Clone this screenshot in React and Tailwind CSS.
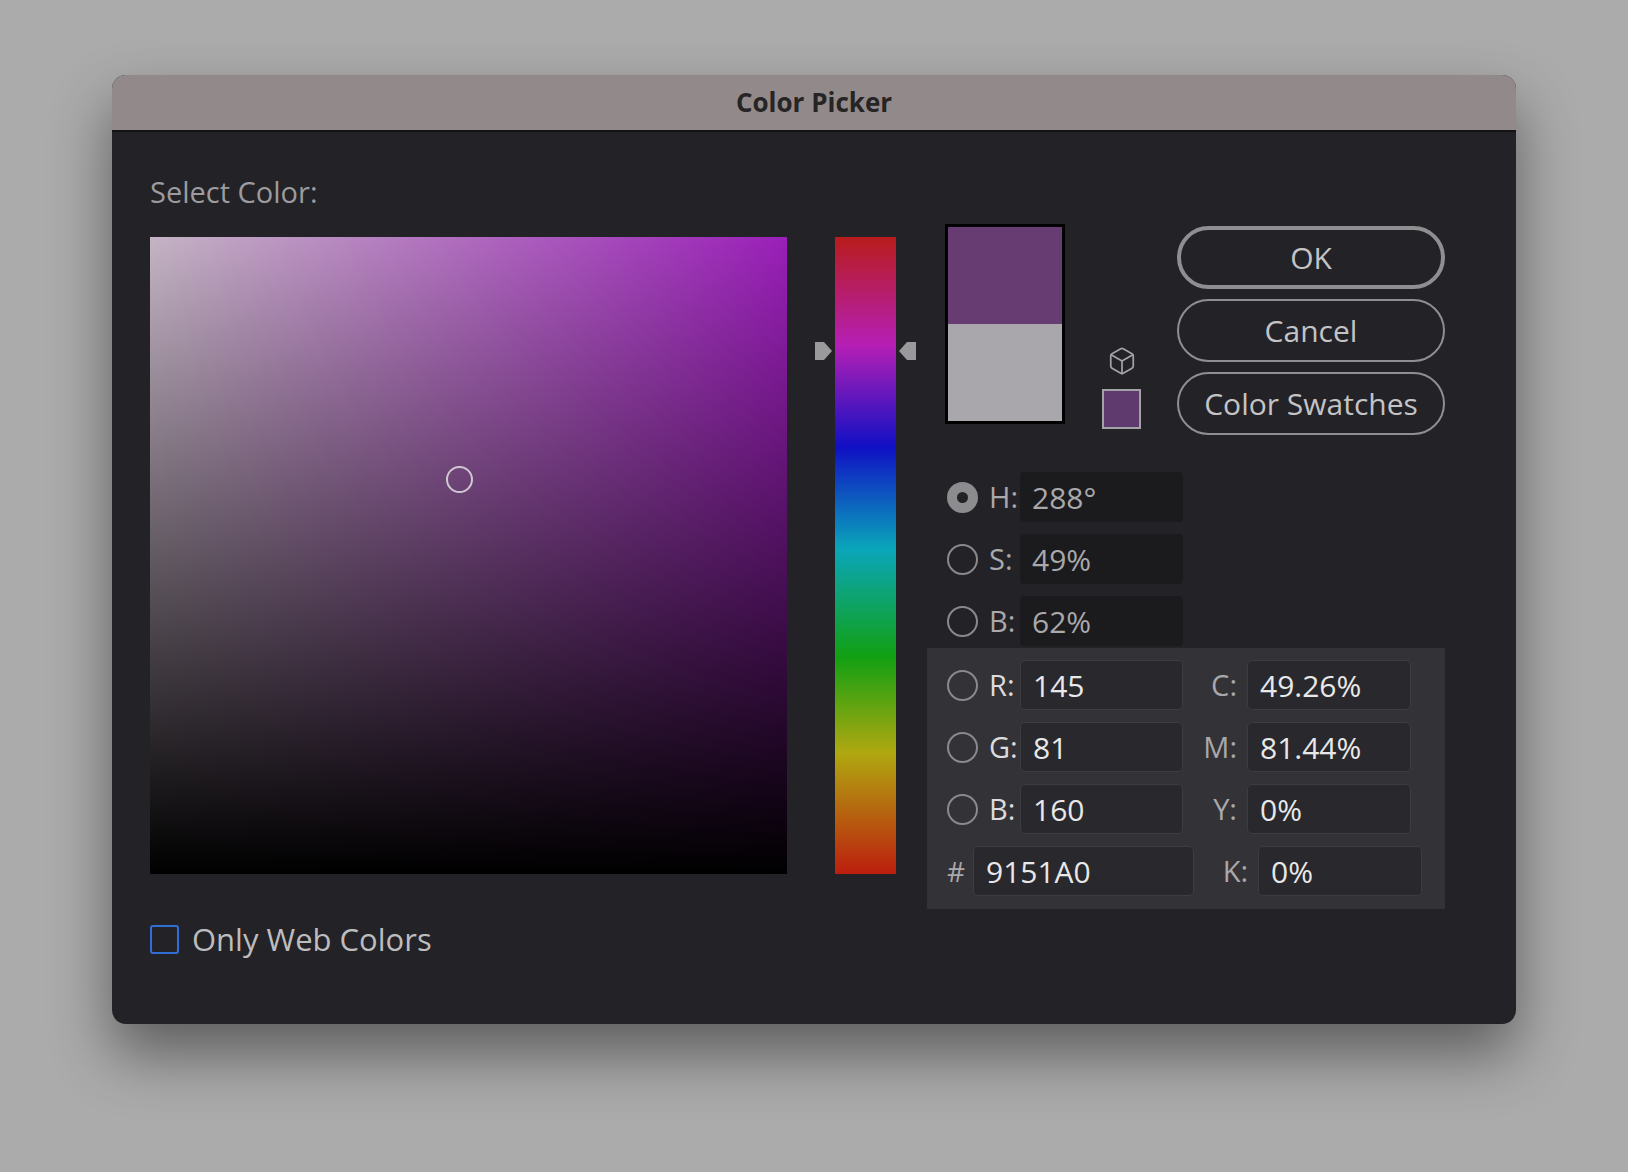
import React from 'react';
import { Box } from 'lucide-react';

const FONT = { fontFamily: '"Open Sans", "Noto Sans", sans-serif' };

function Radio({ on }) {
  if (on) {
    return (
      <div className="w-[31px] h-[31px] rounded-full bg-[#8c8b8e] flex items-center justify-center shrink-0">
        <div className="w-[11px] h-[11px] rounded-full bg-[#232226]" />
      </div>
    );
  }
  return <div className="w-[31px] h-[31px] rounded-full border-2 border-[#8a898c] shrink-0" />;
}

// HSB row: dimmer, dark inputs
function HsbRow({ label, value, on }) {
  return (
    <div className="flex items-center h-[50px] pl-[20px]">
      <Radio on={on} />
      <span className="w-[42px] pl-[11px] text-[29px] text-[#a9a8ab]">{label}</span>
      <div className="w-[163px] h-[50px] rounded-[4px] bg-[#1b1a1d] flex items-center pl-[12px] text-[30px] text-[#a9a8ab]">
        {value}
      </div>
    </div>
  );
}

function Field({ value, w = 'w-[163px]' }) {
  return (
    <div className={`${w} h-[50px] rounded-[5px] bg-[#29282c] border border-[#3d3c40] flex items-center pl-[12px] text-[30px] text-[#e8e8ea]`}>
      {value}
    </div>
  );
}

function PanelRow({ label, value, cLabel, cValue }) {
  return (
    <div className="flex items-center h-[50px]">
      <Radio />
      <span className="w-[42px] pl-[11px] text-[29px] text-[#dcdcde]">{label}</span>
      <Field value={value} />
      <span className="w-[64px] text-right pr-[10px] text-[29px] text-[#a9a8ab]">{cLabel}</span>
      <Field value={cValue} w="w-[164px]" />
    </div>
  );
}

function Button({ children, primary }) {
  return (
    <div
      className={`w-[268px] h-[63px] rounded-full flex items-center justify-center text-[30px] text-[#c4c3c6] ${
        primary ? 'border-[4px] border-[#8f8e91]' : 'border-2 border-[#8f8e91]'
      }`}
    >
      {children}
    </div>
  );
}

export default function App() {
  return (
    <div className="min-h-[1172px] w-[1628px] bg-[#ababab] pt-[75px] pl-[112px]" style={FONT}>
      <div className="w-[1404px] h-[949px] rounded-[14px] bg-[#232226] overflow-hidden shadow-[0_30px_60px_rgba(0,0,0,0.45)]">
        {/* title bar */}
        <div className="h-[57px] bg-[#928a8a] border-b-2 border-[#141414] flex items-center justify-center">
          <span className="text-[26px] font-bold text-[#262424]">Color Picker</span>
        </div>

        <div className="px-[38px]">
          <div className="pt-[38px] h-[92px] text-[29px] text-[#9c9b9e]">Select Color:</div>

          <div className="flex items-start">
            {/* saturation/brightness field */}
            <div className="pt-[13px]">
              <div className="relative w-[637px] h-[637px] bg-[#9a1fb8]">
                <div className="absolute inset-0 bg-gradient-to-r from-[#c4b4c4] to-transparent" />
                <div className="absolute inset-0 bg-gradient-to-b from-transparent to-black" />
                <div className="absolute left-[296px] top-[229px] w-[27px] h-[27px] rounded-full border-2 border-[#cfc8d0]" />
              </div>
              <div className="flex items-center mt-[42px]">
                <div className="w-[29px] h-[29px] rounded-[3px] border-2 border-[#2f6fd6]" />
                <span className="ml-[13px] text-[31px] text-[#bdbcbf]">Only Web Colors</span>
              </div>
            </div>

            {/* hue strip */}
            <div className="pt-[13px] ml-[48px] relative">
              <div className="w-[61px] h-[637px] bg-[linear-gradient(to_bottom,#b81c1c_0%,#b51fb5_17%,#1010c4_33%,#0aa6ba_49%,#12a012_66%,#b0a810_81%,#bc1e0e_100%)]" />
              <svg className="absolute left-[-21px] top-[117px]" width="19" height="20" viewBox="0 0 19 20">
                <path d="M1 1 H10 L18 10 L10 19 H1 Z" fill="#9a999c" />
              </svg>
              <svg className="absolute right-[-21px] top-[117px]" width="19" height="20" viewBox="0 0 19 20">
                <path d="M18 1 H9 L1 10 L9 19 H18 Z" fill="#9a999c" />
              </svg>
            </div>

            {/* right side */}
            <div className="ml-[31px] w-[518px]">
              <div className="flex items-start">
                <div className="ml-[18px] w-[153px] h-[200px] border-[3px] border-black flex flex-col">
                  <div className="h-[97px] bg-[#673c72]" />
                  <div className="flex-1 bg-[#a9a7ab]" />
                </div>
                <div className="ml-[37px] mt-[122px] flex flex-col items-center">
                  <Box size={30} strokeWidth={1.4} className="text-[#a3a2a5]" />
                  <div className="mt-[13px] w-[39px] h-[40px] bg-[#5e3a6e] border-2 border-[#a3a2a5]" />
                </div>
                <div className="ml-[36px] mt-[2px] flex flex-col gap-[10px]">
                  <Button primary>OK</Button>
                  <Button>Cancel</Button>
                  <Button>Color Swatches</Button>
                </div>
              </div>

              <div className="mt-[37px] flex flex-col gap-[12px]">
                <HsbRow label="H:" value="288°" on />
                <HsbRow label="S:" value="49%" />
                <HsbRow label="B:" value="62%" />
              </div>

              <div className="mt-[2px] w-[518px] bg-[#333236] pl-[20px] pt-[12px] pb-[13px] flex flex-col gap-[12px]">
                <PanelRow label="R:" value="145" cLabel="C:" cValue="49.26%" />
                <PanelRow label="G:" value="81" cLabel="M:" cValue="81.44%" />
                <PanelRow label="B:" value="160" cLabel="Y:" cValue="0%" />
                <div className="flex items-center h-[50px]">
                  <span className="w-[26px] text-[28px] text-[#a9a8ab]">#</span>
                  <Field value="9151A0" w="w-[221px]" />
                  <span className="w-[64px] text-right pr-[10px] text-[29px] text-[#a9a8ab]">K:</span>
                  <Field value="0%" w="w-[164px]" />
                </div>
              </div>
            </div>
          </div>
        </div>
      </div>
    </div>
  );
}
